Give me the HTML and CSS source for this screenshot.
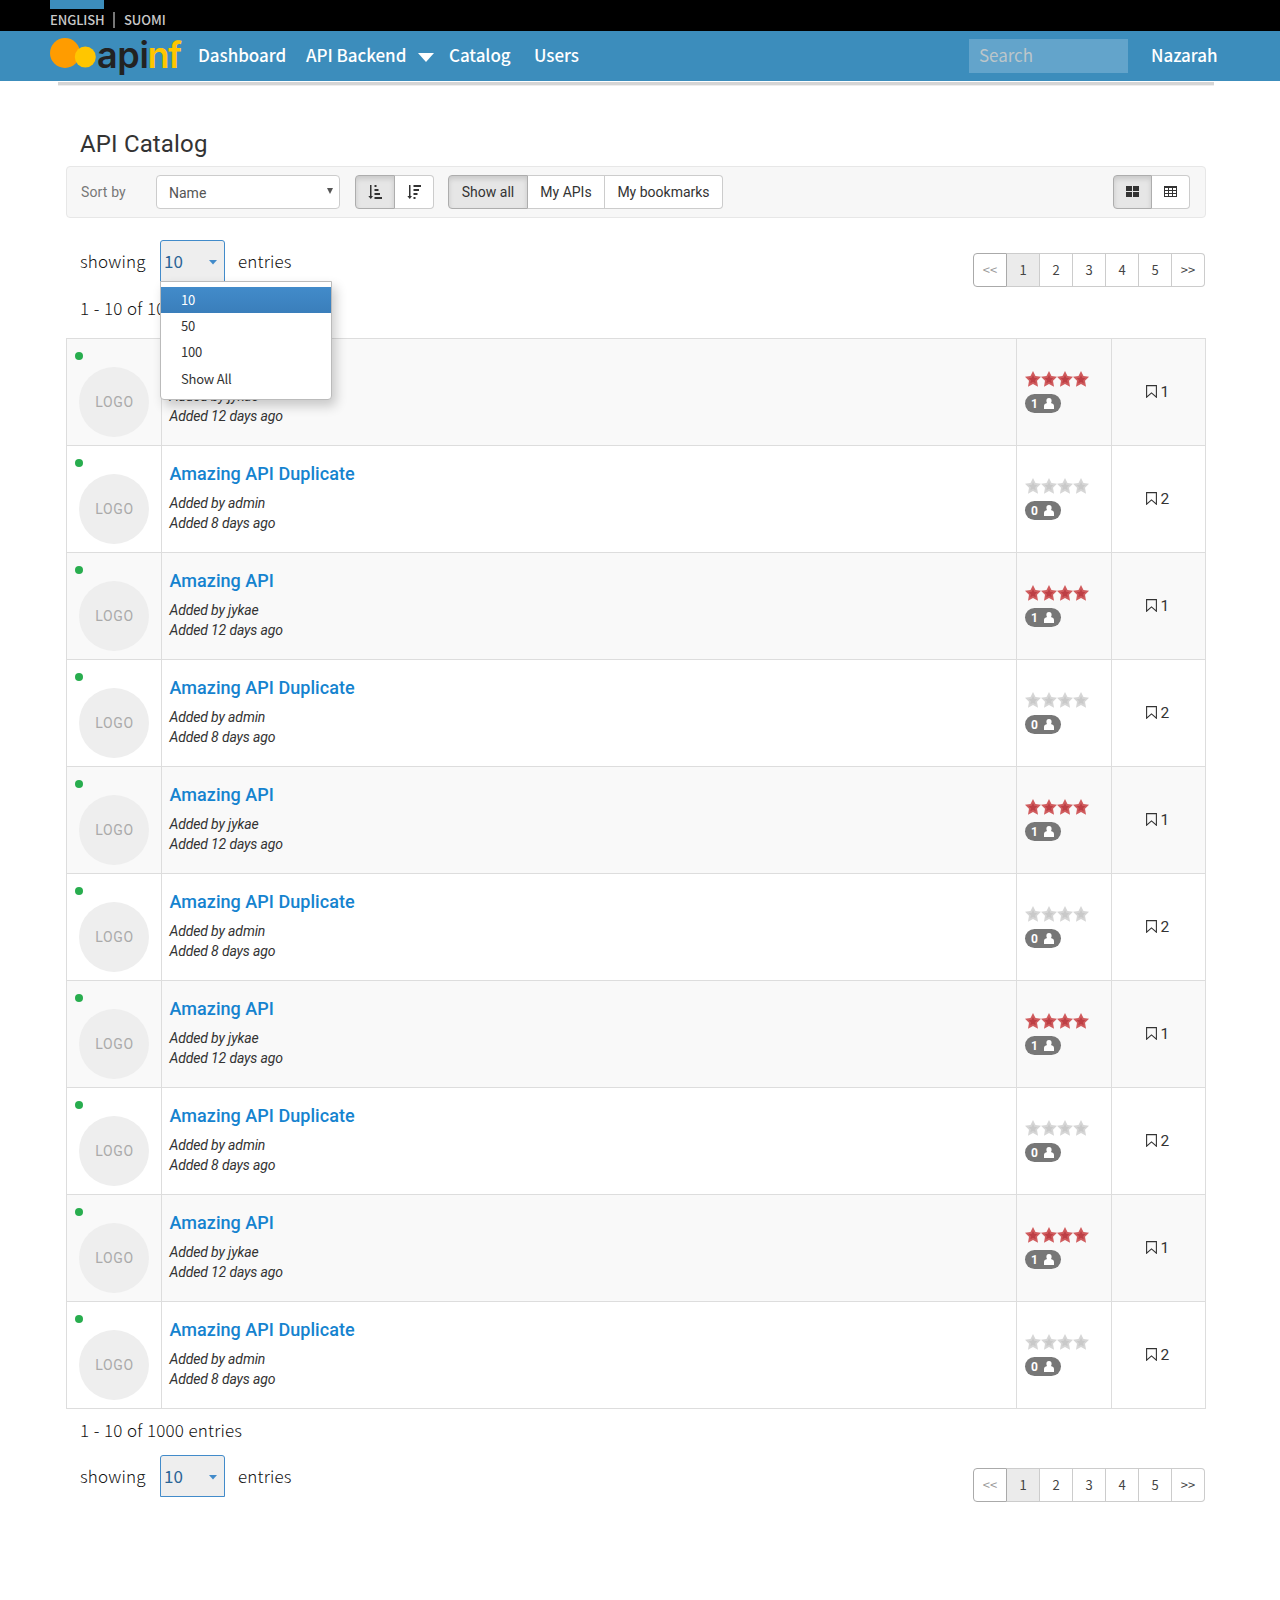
FILE: index.html
```html
<!DOCTYPE html>
<html lang="en">
<head>
<meta charset="utf-8">
<title>API Catalog</title>
<link rel="stylesheet" href="styles.css">
</head>
<body>
<svg class="defs" width="0" height="0">
  <defs>
    <symbol id="star" viewBox="0 0 16 16"><path d="M8 0l2.500 5 5.500.7-4 4 1 6L8 13l-5 2.700 1-6-4-4L5.500 5z" fill="var(--edge)"/><path d="M8 4l1.300 2.800 3 .4-2.200 2.100.6 3L8 10.900l-2.700 1.400.6-3-2.200-2.100 3-.4z" fill="var(--core)"/></symbol>
    <symbol id="user" viewBox="0 0 10 11"><path d="M5 0c1.800 0 2.700 1.200 2.600 3 0 .9-.3 1.600-.7 2.100 1.700.5 3.100 1 3.100 3V11H0V8.100c0-2 1.400-2.500 3.100-3-.4-.5-.7-1.200-.7-2.100C2.300 1.200 3.200 0 5 0z" fill="#fff"/></symbol>
    <symbol id="mark" viewBox="0 0 11 13"><path d="M.6.6h9.800v11.600L5.500 7.900.6 12.200z" fill="none" stroke="currentColor" stroke-width="1.100"/></symbol>
    <symbol id="arrow" viewBox="0 0 14 14"><path d="M2 0h1.500v11H5l-2.200 3L.3 11H2z" fill="currentColor"/></symbol>
  </defs>
</svg>
<div class="topbar">
  <a class="lang lang-on">ENGLISH</a><i class="bar"></i><a class="lang">SUOMI</a>
</div>
<header class="nav">
  <svg class="logo" width="140" height="50" viewBox="0 0 140 50"><circle cx="15" cy="22" r="15" fill="#ff9c00"/><circle cx="35.300" cy="26" r="10.500" fill="#ffc600"/><text x="47 67.300 89.500 97.600 118" y="36.500" class="logo-text">api<tspan fill="#ffc600">nf</tspan></text></svg>
  <a class="n1">Dashboard</a><a class="n2">API Backend</a><svg class="caret" width="16" height="9"><path d="M0 0h16L8 9z" fill="#fff"/></svg><a class="n3">Catalog</a><a class="n4">Users</a>
  <span class="search">Search</span><a class="user">Nazarah</a>
</header>
<div class="underline"></div>
<main>
  <h1>API Catalog</h1>
  <div class="toolbar">
    <span class="sortby">Sort by</span>
    <div class="select">Name<svg width="6" height="6"><path d="M0 0h6L3 6z" fill="#555"/></svg></div>
    <div class="group order">
      <span class="btn on"><svg width="14" height="14"><use href="#arrow"/><path d="M6.500 0h2v2h-2zM6.500 4h4v2h-4zM6.500 8h5.500v2H6.500zM6.500 12h7.500v2H6.500z" fill="currentColor"/></svg></span><span class="btn"><svg width="14" height="14"><use href="#arrow"/><path d="M6.500 0h7.500v2H6.500zM6.500 4h5.500v2H6.500zM6.500 8h4v2h-4zM6.500 12h2v2h-2z" fill="currentColor"/></svg></span>
    </div>
    <div class="group filter"><span class="btn on">Show all</span><span class="btn">My APIs</span><span class="btn">My bookmarks</span></div>
    <div class="group view">
      <span class="btn on"><svg width="13" height="11"><path d="M0 0h6v5H0zM7 0h6v5H7zM0 6h6v5H0zM7 6h6v5H7z" fill="currentColor"/></svg></span><span class="btn"><svg width="13" height="11"><path d="M0 0h13v11H0zM1 2v2h3V2zM5 2v2h3V2zM9 2v2h3V2zM1 5v2h3V5zM5 5v2h3V5zM9 5v2h3V5zM1 8v2h3V8zM5 8v2h3V8zM9 8v2h3V8z" fill="currentColor" fill-rule="evenodd"/></svg></span>
    </div>
  </div>
  <div class="pager">
    <span class="showing">showing</span>
    <div class="size"><span>10</span><svg width="8" height="5"><path d="M0 0h8L4 4.500z" fill="#428bca"/></svg>
      <div class="menu"><span class="hot">10</span><span>50</span><span>100</span><span>Show All</span></div>
    </div>
    <span class="entries">entries</span>
    <div class="pages"><span class="off">&lt;&lt;</span><span class="cur">1</span><span>2</span><span>3</span><span>4</span><span>5</span><span>&gt;&gt;</span></div>
  </div>
  <div class="range">1 - 10 of 1000 entries</div>
  <div class="list">
    <div class="row odd"><div class="pic"><i></i><b>LOGO</b></div><div class="info"><h2>Amazing API</h2><p>Added by jykae</p><p>Added 12 days ago</p></div><div class="rate"><div class="stars"><svg><use href="#star"/></svg><svg><use href="#star"/></svg><svg><use href="#star"/></svg><svg><use href="#star"/></svg></div><span class="badge">1<svg><use href="#user"/></svg></span></div><div class="marks"><svg><use href="#mark"/></svg>1</div></div>
    <div class="row"><div class="pic"><i></i><b>LOGO</b></div><div class="info"><h2>Amazing API Duplicate</h2><p>Added by admin</p><p>Added 8 days ago</p></div><div class="rate"><div class="stars"><svg><use href="#star"/></svg><svg><use href="#star"/></svg><svg><use href="#star"/></svg><svg><use href="#star"/></svg></div><span class="badge">0<svg><use href="#user"/></svg></span></div><div class="marks"><svg><use href="#mark"/></svg>2</div></div>
    <div class="row odd"><div class="pic"><i></i><b>LOGO</b></div><div class="info"><h2>Amazing API</h2><p>Added by jykae</p><p>Added 12 days ago</p></div><div class="rate"><div class="stars"><svg><use href="#star"/></svg><svg><use href="#star"/></svg><svg><use href="#star"/></svg><svg><use href="#star"/></svg></div><span class="badge">1<svg><use href="#user"/></svg></span></div><div class="marks"><svg><use href="#mark"/></svg>1</div></div>
    <div class="row"><div class="pic"><i></i><b>LOGO</b></div><div class="info"><h2>Amazing API Duplicate</h2><p>Added by admin</p><p>Added 8 days ago</p></div><div class="rate"><div class="stars"><svg><use href="#star"/></svg><svg><use href="#star"/></svg><svg><use href="#star"/></svg><svg><use href="#star"/></svg></div><span class="badge">0<svg><use href="#user"/></svg></span></div><div class="marks"><svg><use href="#mark"/></svg>2</div></div>
    <div class="row odd"><div class="pic"><i></i><b>LOGO</b></div><div class="info"><h2>Amazing API</h2><p>Added by jykae</p><p>Added 12 days ago</p></div><div class="rate"><div class="stars"><svg><use href="#star"/></svg><svg><use href="#star"/></svg><svg><use href="#star"/></svg><svg><use href="#star"/></svg></div><span class="badge">1<svg><use href="#user"/></svg></span></div><div class="marks"><svg><use href="#mark"/></svg>1</div></div>
    <div class="row"><div class="pic"><i></i><b>LOGO</b></div><div class="info"><h2>Amazing API Duplicate</h2><p>Added by admin</p><p>Added 8 days ago</p></div><div class="rate"><div class="stars"><svg><use href="#star"/></svg><svg><use href="#star"/></svg><svg><use href="#star"/></svg><svg><use href="#star"/></svg></div><span class="badge">0<svg><use href="#user"/></svg></span></div><div class="marks"><svg><use href="#mark"/></svg>2</div></div>
    <div class="row odd"><div class="pic"><i></i><b>LOGO</b></div><div class="info"><h2>Amazing API</h2><p>Added by jykae</p><p>Added 12 days ago</p></div><div class="rate"><div class="stars"><svg><use href="#star"/></svg><svg><use href="#star"/></svg><svg><use href="#star"/></svg><svg><use href="#star"/></svg></div><span class="badge">1<svg><use href="#user"/></svg></span></div><div class="marks"><svg><use href="#mark"/></svg>1</div></div>
    <div class="row"><div class="pic"><i></i><b>LOGO</b></div><div class="info"><h2>Amazing API Duplicate</h2><p>Added by admin</p><p>Added 8 days ago</p></div><div class="rate"><div class="stars"><svg><use href="#star"/></svg><svg><use href="#star"/></svg><svg><use href="#star"/></svg><svg><use href="#star"/></svg></div><span class="badge">0<svg><use href="#user"/></svg></span></div><div class="marks"><svg><use href="#mark"/></svg>2</div></div>
    <div class="row odd"><div class="pic"><i></i><b>LOGO</b></div><div class="info"><h2>Amazing API</h2><p>Added by jykae</p><p>Added 12 days ago</p></div><div class="rate"><div class="stars"><svg><use href="#star"/></svg><svg><use href="#star"/></svg><svg><use href="#star"/></svg><svg><use href="#star"/></svg></div><span class="badge">1<svg><use href="#user"/></svg></span></div><div class="marks"><svg><use href="#mark"/></svg>1</div></div>
    <div class="row"><div class="pic"><i></i><b>LOGO</b></div><div class="info"><h2>Amazing API Duplicate</h2><p>Added by admin</p><p>Added 8 days ago</p></div><div class="rate"><div class="stars"><svg><use href="#star"/></svg><svg><use href="#star"/></svg><svg><use href="#star"/></svg><svg><use href="#star"/></svg></div><span class="badge">0<svg><use href="#user"/></svg></span></div><div class="marks"><svg><use href="#mark"/></svg>2</div></div>
  </div>
  <div class="range range-end">1 - 10 of 1000 entries</div>
  <div class="pager pager-end">
    <span class="showing">showing</span>
    <div class="size"><span>10</span><svg width="8" height="5"><path d="M0 0h8L4 4.500z" fill="#428bca"/></svg></div>
    <span class="entries">entries</span>
    <div class="pages"><span class="off">&lt;&lt;</span><span class="cur">1</span><span>2</span><span>3</span><span>4</span><span>5</span><span>&gt;&gt;</span></div>
  </div>
</main>
</body>
</html>
```
FILE: styles.css
```css
* { box-sizing: border-box; }
body { margin: 0; min-height: 1600px; background: #fff; color: #333; font: 14px/20px Roboto, sans-serif; }
svg { display: block; flex: none; }
.defs { position: absolute; }
.topbar, .nav, .pager, .range { font-family: "Noto Sans CJK SC", sans-serif; white-space: nowrap; }

.topbar { display: flex; height: 31px; padding-left: 50px; background: #000; }
.lang { height: 31px; padding-top: 9px; font-size: 13px; line-height: 22px; font-weight: 500; letter-spacing: -.1px; color: #c9c9c9; }
.lang-on { width: 54px; border-top: 9px solid #3c8dbc; padding-top: 0; line-height: 22px; }
.bar { width: 2px; height: 16px; margin: 12px 9px 0 9px; background: #777; }

.nav { display: flex; align-items: center; height: 50px; padding-left: 50px; background: #3c8dbc; color: #fff; font-size: 17px; line-height: 26px; font-weight: 500; letter-spacing: -.05px; }
.nav a { flex: none; padding-bottom: 2px; }
.logo { overflow: visible; }
.logo-text { font: 600 36px Inter, sans-serif; letter-spacing: 0; fill: #222; }
.n1 { width: 108px; margin-left: 8px; }
.n2 { width: 112px; }
.caret { margin-top: 3px; }
.n3 { width: 85px; margin-left: 15px; }
.n4 { width: 435px; }
.search { width: 159px; height: 34px; padding: 3px 10px; background: #63a4cb; color: #bcc6ca; font-weight: 400; }
.user { margin-left: 23px; }
.underline { height: 4px; margin: 1px 66px 0 58px; background: #d5d5d5; border-bottom: 1px solid #eee; }

main { width: 1140px; margin: 44px 0 0 66px; }
h1 { margin: 0 0 8px 14px; font-size: 24px; line-height: 28px; font-weight: 400; letter-spacing: .15px; }
.toolbar { display: flex; height: 52px; padding: 8px 15px 8px 14px; background: #f7f7f7; border: 1px solid #e7e7e7; border-radius: 4px; line-height: 32px; }
.sortby { width: 75px; padding-top: 1px; color: #777; letter-spacing: .15px; }
.select { display: flex; justify-content: space-between; align-items: center; width: 184px; height: 34px; padding: 2px 6px 0 12px; border: 1px solid #ccc; border-radius: 4px; background: #fff; color: #555; }
.select svg { margin-bottom: 4px; }
.group { display: flex; height: 34px; margin-left: 15px; }
.btn { display: flex; align-items: center; justify-content: center; border: 1px solid #ccc; border-left-width: 0; background: #fff; }
.btn:last-child { border-radius: 0 4px 4px 0; }
.btn.on { border: 1px solid #adadad; border-radius: 4px 0 0 4px; background: #e6e6e6; box-shadow: inset 0 3px 5px rgba(0,0,0,.125); }
.order .btn { width: 39px; }
.order .on { width: 40px; }
.filter { margin-left: 14px; }
.filter .btn:nth-child(1) { width: 80px; }
.filter .btn:nth-child(2) { width: 77px; }
.filter .btn:nth-child(3) { width: 118px; }
.view { margin-left: auto; }
.view .btn { width: 38px; padding: 0 1px 1px 0; }
.view .on { width: 39px; }

.pager { display: flex; height: 47px; margin-top: 22px; padding: 0 1px 0 14px; color: #111; font-size: 17px; line-height: 42px; font-weight: 300; letter-spacing: .15px; }
.showing { width: 80px; }
.size { position: relative; display: flex; justify-content: space-between; align-items: center; width: 65px; height: 42px; padding: 0 7px 0 3px; border: 1px solid #428bca; border-radius: 3px 3px 0 0; background: #eee; color: #2a6496; font-weight: 400; }
.size > svg { margin-top: 2px; }
.entries { margin-left: 13px; }
.menu { position: absolute; z-index: 2; left: -1px; top: 40px; width: 172px; height: 119px; padding-top: 5px; border: 1px solid #bbb; border-radius: 0 0 4px 4px; background: #fff; box-shadow: 4px 6px 12px rgba(0,0,0,.2); color: #333; font-size: 13px; line-height: 26px; letter-spacing: -.2px; }
.menu span { display: block; height: 26.200px; padding-left: 20px; }
.menu .hot { background: linear-gradient(#428bca, #3a7ebb); color: #fff; }
.pages { display: flex; margin: 13px 0 0 auto; height: 34px; letter-spacing: 0; }
.pages span { width: 33px; border: 1px solid #ccc; border-left-width: 0; text-align: center; font-size: 13px; line-height: 32px; font-weight: 400; color: #444; }
.pages .off { width: 34px; border: 1px solid #aaa; border-radius: 4px 0 0 4px; color: #999; }
.pages .cur { background: #ebebeb; }
.pages span:last-child { border-radius: 0 4px 4px 0; }
.range { margin: 9px 0 18px 14px; color: #111; font-size: 17px; line-height: 24px; font-weight: 300; letter-spacing: .15px; word-spacing: .6px; }
.range-end { margin-bottom: 0; }
.pager-end { margin-top: 13px; }

.list { border-bottom: 1px solid #ddd; }
.row { display: grid; grid-template-columns: 95px 855px 95px 95px; height: 107px; border-top: 1px solid #ddd; }
.row > div { border-left: 1px solid #ddd; }
.row > .marks { border-right: 1px solid #ddd; }
.odd { background: #f9f9f9; }
.pic { padding: 13px 0 0 8px; }
.pic i { display: block; width: 8px; height: 8px; border-radius: 50%; background: #28ad4e; }
.pic b { display: block; width: 70px; height: 70px; margin: 7px 0 0 4px; border-radius: 50%; background: #eee; color: #aaa; font-weight: 400; letter-spacing: .7px; text-indent: 1px; line-height: 70px; text-align: center; }
.info { padding: 15px 8px 0 7.500px; }
h2 { margin: 0 0 7px; color: #1583cf; font-size: 18px; line-height: 25px; font-weight: 500; letter-spacing: .04px; }
.info p { margin: 0; font-style: italic; line-height: 20px; letter-spacing: -.14px; }
.rate { padding: 32px 8px 0; }
.stars { display: flex; --edge: #d6d6d6; --core: #c9c9c9; }
.stars svg { width: 16px; height: 16px; }
.odd .stars { --edge: #d05c5e; --core: #bd3f45; }
.badge { display: flex; align-items: center; justify-content: space-between; width: 36px; height: 19px; margin-top: 7px; padding: 0 7px 0 6px; border-radius: 10px; background: #777; color: #fff; font-size: 12px; font-weight: 700; }
.badge svg { width: 10px; height: 11px; }
.marks { display: flex; align-items: center; gap: 3.500px; padding: 0 0 1px 34px; font-size: 15.500px; }
.marks svg { width: 11px; height: 13px; }
```
